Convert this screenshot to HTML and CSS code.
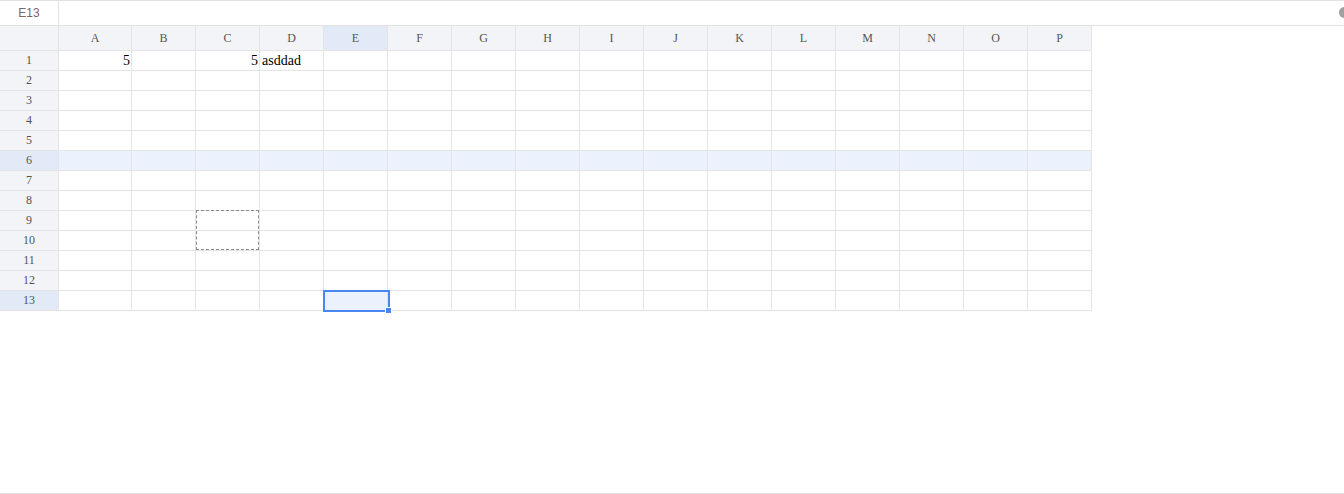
FILE: index.html
```html
<!DOCTYPE html>
<html>
<head>
<meta charset="utf-8">
<link rel="stylesheet" href="styles.css">
</head>
<body>
<div class="app">
  <div class="topbar">
    <div class="namebox">E13</div>
    <div class="formula"></div>
    <div class="dot"></div>
  </div>
  <div class="sheet">
    <div class="grid" id="grid"></div>
    <div class="copy-box"></div>
    <div class="sel-box"><div class="handle"></div></div>
  </div>
</div>
<script src="script.js"></script>
</body>
</html>
```
FILE: script.js
```js
const cols = "ABCDEFGHIJKLMNOP".split("");
const grid = document.getElementById("grid");
function cell(cls, text) {
  const d = document.createElement("div");
  d.className = cls;
  if (text !== undefined) d.textContent = text;
  grid.appendChild(d);
  return d;
}
cell("corner");
cols.forEach(c => cell("colhead" + (c === "E" ? " active" : ""), c));
const data = { "A1": ["5", "num"], "C1": ["5", "num"], "D1": ["asddad", "txt"] };
for (let r = 1; r <= 13; r++) {
  cell("rowhead" + (r === 6 || r === 13 ? " active" : ""), String(r));
  cols.forEach(c => {
    const v = data[c + r];
    let cls = "cell" + (r === 6 ? " hl" : "") + (r === 13 && c === "E" ? " sel" : "");
    if (v) cls += " " + v[1];
    cell(cls, v ? v[0] : undefined);
  });
}
```
FILE: styles.css
```css
html, body {
  margin: 0;
  padding: 0;
  background: #fff;
}
.app {
  width: 1344px;
  height: 493px;
  border-bottom: 1px solid #e2e2e2;
  position: relative;
  overflow: hidden;
}
.topbar {
  display: flex;
  height: 24px;
  border-top: 1px solid #e2e2e2;
  border-bottom: 1px solid #e2e2e2;
  position: relative;
}
.namebox {
  width: 58px;
  border-right: 1px solid #e2e2e2;
  font-family: "Liberation Sans", Arial, sans-serif;
  font-size: 12px;
  color: #7d6662;
  display: flex;
  align-items: center;
  justify-content: center;
}
.formula {
  flex: 1;
}
.dot {
  position: absolute;
  right: -6px;
  top: 6px;
  width: 11px;
  height: 11px;
  border-radius: 50%;
  background: #a0a0a0;
}
.sheet {
  position: relative;
}
.grid {
  display: grid;
  grid-template-columns: 59px 73px repeat(15, 64px);
  grid-template-rows: 25px repeat(13, 20px);
  width: 1092px;
  font-family: "Liberation Serif", "Times New Roman", serif;
}
.grid > div {
  box-sizing: border-box;
  border-right: 1px solid #e4e4e4;
  border-bottom: 1px solid #e4e4e4;
  overflow: hidden;
  white-space: nowrap;
}
.corner, .colhead, .rowhead {
  background: #f3f4f7;
  color: #555;
  font-size: 12px;
  display: flex;
  align-items: center;
  justify-content: center;
}
.colhead.active, .rowhead.active {
  background: #e2eaf8;
}
.cell {
  font-size: 14px;
  color: #000;
  line-height: 19px;
  padding: 0 2px;
}
.cell.num { text-align: right; padding-right: 1px; }
.cell.txt { text-align: left; padding-left: 2px; }
.cell.hl { background: #ebf2fd; }
.cell.sel { background: #ebf2fd; }
.copy-box {
  position: absolute;
  left: 196px;
  top: 184px;
  width: 63px;
  height: 40px;
  box-sizing: border-box;
  border: 1px dashed #8a8a8a;
}
.sel-box {
  position: absolute;
  left: 323px;
  top: 264px;
  width: 67px;
  height: 22px;
  box-sizing: border-box;
  border: 2px solid #4a86f0;
}
.handle {
  position: absolute;
  right: -4px;
  bottom: -4px;
  width: 5px;
  height: 5px;
  background: #4a86f0;
  border: 1px solid #fff;
}
```
